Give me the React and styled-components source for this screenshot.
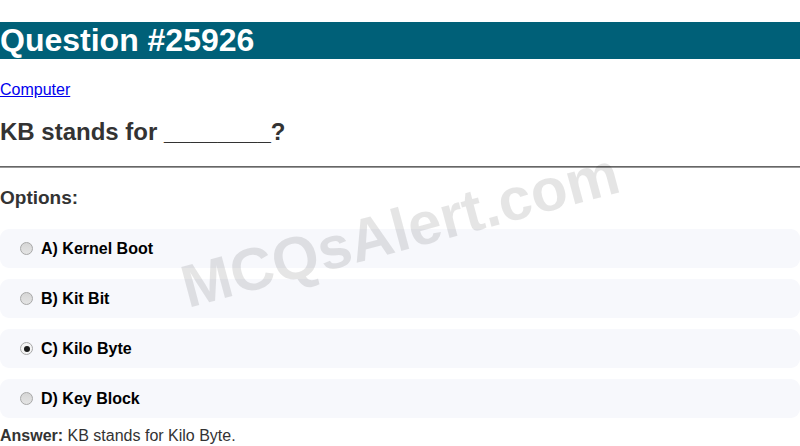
import React from "react"
import styled, { createGlobalStyle } from "styled-components"

const GlobalStyle = createGlobalStyle`
  body {
    margin: 0;
    font-family: "Liberation Sans", Arial, sans-serif;
    background: #fff;
    overflow: hidden;
  }
`

const Page = styled.div`
  position: relative;
  width: 800px;
  height: 446px;
  overflow: hidden;
`

const Title = styled.h1`
  margin: 22px 0 21px;
  background: #006078;
  color: #fff;
  font-size: 32px;
  font-weight: 700;
  line-height: 37px;
`

const Category = styled.p`
  margin: 0;
  font-size: 16px;
  line-height: 19px;

  a {
    color: #0000ee;
    text-decoration: underline;
  }
`

const Question = styled.h2`
  margin: 19px 0 20px;
  color: #333;
  font-size: 24px;
  line-height: 28px;
`

const Rule = styled.hr`
  margin: 0;
  border: 0;
  border-top: 1px solid #666;
  border-bottom: 1px solid #999;
`

const OptionsHead = styled.h3`
  margin: 19px 0 21px;
  color: #333;
  font-size: 19px;
  line-height: 21px;
`

const OptionList = styled.div`
  display: flex;
  flex-direction: column;
  gap: 11px;
`

const Option = styled.label`
  display: flex;
  align-items: center;
  height: 39px;
  padding: 1px 15px 0;
  box-sizing: border-box;
  background: #f7f8fc;
  border-radius: 9px;
  font-size: 16px;
  font-weight: 700;
  color: #000;
`

const Radio = styled.input`
  appearance: none;
  width: 13px;
  height: 13px;
  margin: 0 8px 1px 5px;
  border-radius: 50%;
  border: 1px solid #a8a8a8;
  box-sizing: border-box;
  background: ${p => (p.checked ? "#f4f4f4" : "linear-gradient(#d6d6d6, #e4e4e4)")};
  position: relative;

  &:checked::after {
    content: "";
    position: absolute;
    left: 2.5px;
    top: 2.5px;
    width: 6px;
    height: 6px;
    border-radius: 50%;
    background: #1a1a1a;
  }
`

const Answer = styled.div`
  margin-top: 8px;
  font-size: 16px;
  line-height: 19px;
  color: #333;

  b {
    font-weight: 700;
  }
`

const Watermark = styled.div`
  position: absolute;
  left: 400px;
  top: 230px;
  transform: translate(-50%, -50%) rotate(-15deg);
  font-size: 60px;
  font-weight: 700;
  color: rgba(0, 0, 0, 0.1);
  white-space: nowrap;
  pointer-events: none;
`

const options = [
  { key: "A", text: "Kernel Boot" },
  { key: "B", text: "Kit Bit" },
  { key: "C", text: "Kilo Byte", checked: true },
  { key: "D", text: "Key Block" },
]

const App = () => (
  <Page>
    <GlobalStyle />
    <Title>Question #25926</Title>
    <Category>
      <a href="#">Computer</a>
    </Category>
    <Question>KB stands for ________?</Question>
    <Rule />
    <OptionsHead>Options:</OptionsHead>
    <OptionList>
      {options.map(o => (
        <Option key={o.key}>
          <Radio type="radio" name="q" checked={!!o.checked} readOnly />
          {o.key}) {o.text}
        </Option>
      ))}
    </OptionList>
    <Answer>
      <b>Answer:</b> KB stands for Kilo Byte.
    </Answer>
    <Watermark>MCQsAlert.com</Watermark>
  </Page>
)

export default App
